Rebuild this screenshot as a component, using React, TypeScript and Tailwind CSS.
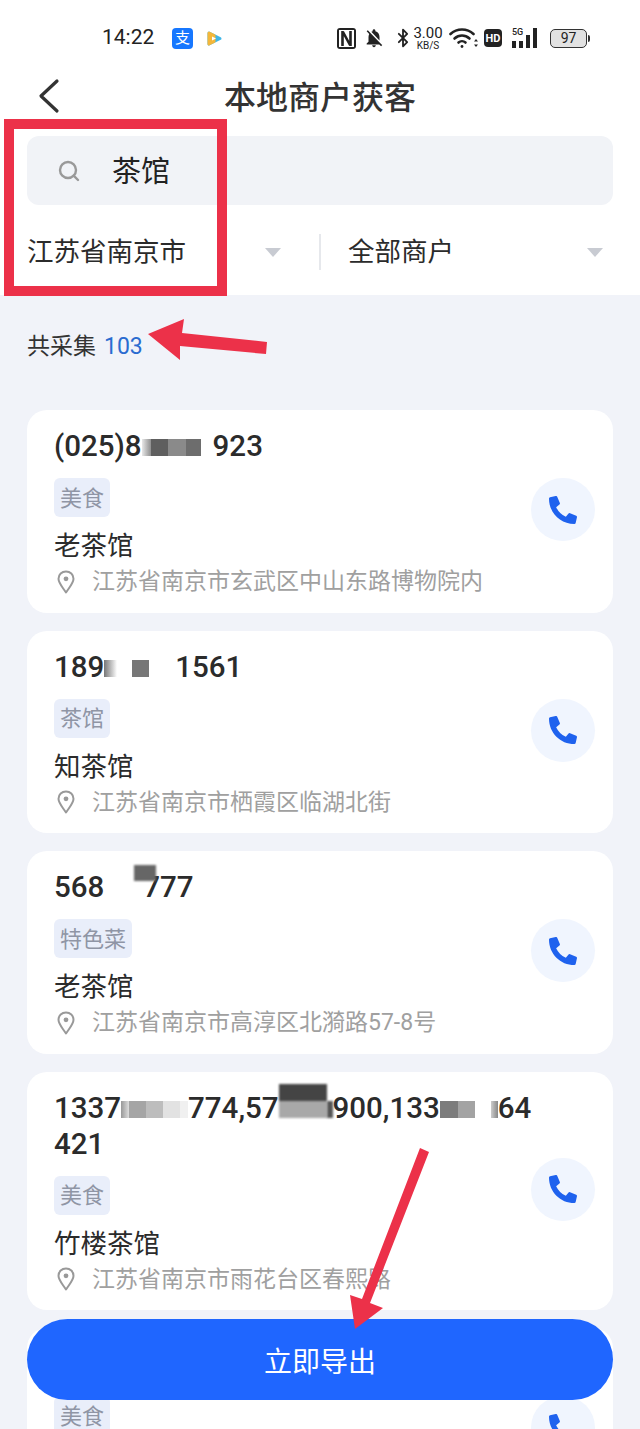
import type { ReactNode } from "react";
import { Bluetooth, Search } from "lucide-react";
import { FaPhoneAlt } from "react-icons/fa";
import { MdNotificationsOff } from "react-icons/md";

type Shop = {
  phone: ReactNode;
  tag: string;
  name?: string;
  address?: string;
};

const shops: Shop[] = [
  {
    phone: (
      <>
        (025)8
        <i className="inline-block w-[9px] h-[17px] bg-gradient-to-r from-[#e8e8e8] to-[#8f8f8f]" />
        <i className="inline-block w-[17px] h-[17px] bg-[#5f5f5f]" />
        <i className="inline-block w-[18px] h-[17px] bg-[#8a8a8a]" />
        <i className="inline-block w-[15px] h-[17px] bg-[#6d6d6d]" />
        <i className="inline-block w-[12px] h-[17px]" />
        923
      </>
    ),
    tag: "美食",
    name: "老茶馆",
    address: "江苏省南京市玄武区中山东路博物院内",
  },
  {
    phone: (
      <>
        189
        <i className="inline-block w-[13px] h-[17px] bg-gradient-to-r from-[#777777] to-white" />
        <i className="inline-block w-[15px] h-[17px]" />
        <i className="inline-block w-[17px] h-[17px] bg-[#777777]" />
        <i className="inline-block w-[26px] h-[17px]" />
        1561
      </>
    ),
    tag: "茶馆",
    name: "知茶馆",
    address: "江苏省南京市栖霞区临湖北街",
  },
  {
    phone: (
      <>
        568
        <i className="inline-block w-[30px] h-[17px]" />
        <i className="inline-block w-[22px] h-[32px] -mt-[15px] -mr-[13px] blur-[1px] bg-[linear-gradient(#666666_50%,transparent_50%)]" />
        777
      </>
    ),
    tag: "特色菜",
    name: "老茶馆",
    address: "江苏省南京市高淳区北漪路57-8号",
  },
  {
    phone: (
      <>
        1337
        <i className="inline-block w-[8px] h-[17px] bg-gradient-to-r from-[#999999] to-[#dddddd]" />
        <i className="inline-block w-[17px] h-[17px] bg-[#a5a5a5]" />
        <i className="inline-block w-[17px] h-[17px] bg-[#bdbdbd]" />
        <i className="inline-block w-[17px] h-[17px] bg-[#e2e2e2]" />
        <i className="inline-block w-[8px] h-[17px] bg-[#f0f0f0]" />
        774,57
        <i className="inline-block w-[48px] h-[34px] -mt-[17px] blur-[1px] bg-[linear-gradient(#444444_50%,#a8a8a8_50%)]" />
        <i className="inline-block w-[6px] h-[17px] bg-[#555555] blur-[1px]" />
        900,133
        <i className="inline-block w-[18px] h-[17px] bg-[#7c7c7c]" />
        <i className="inline-block w-[17px] h-[17px] bg-[#a3a3a3]" />
        <i className="inline-block w-[16px] h-[17px]" />
        <i className="inline-block w-[7px] h-[17px] bg-gradient-to-r from-[#cccccc] to-[#888888]" />
        64
        <br />
        421
      </>
    ),
    tag: "美食",
    name: "竹楼茶馆",
    address: "江苏省南京市雨花台区春熙路",
  },
  { phone: "\u00a0", tag: "美食" },
];

function StatusBar() {
  return (
    <div className="flex items-center h-[76px] pl-[102px] text-[#222]">
      <span className="text-[21px] w-[70px]">14:22</span>
      <span className="flex items-center justify-center w-[21px] h-[21px] rounded-[4px] bg-[#1677ff] text-white text-[15px] leading-none">
        支
      </span>
      <svg className="ml-[13px]" width="17" height="17" viewBox="0 0 17 17">
        <path d="M3 3 L14 8.5 L3 14 Z" fill="#3fb6e8" stroke="#3fb6e8" strokeWidth="3" strokeLinejoin="round" />
        <path d="M3 3 L8 5.5 L8 11.5 L3 14 Z" fill="#f4b73a" stroke="#f4b73a" strokeWidth="3" strokeLinejoin="round" />
        <path d="M6 6.5 L10 8.5 L6 10.5 Z" fill="#ffffff" />
      </svg>
      <svg className="ml-[114px]" width="19" height="21" viewBox="0 0 19 21">
        <rect x="0" y="0" width="19" height="21" rx="3" fill="#222222" />
        <rect x="2" y="2" width="15" height="17" fill="#ffffff" />
        <path d="M5.5 3 V18 M13.5 3 V18 M6 4 L13 17" stroke="#222222" strokeWidth="2.6" fill="none" />
      </svg>
      <MdNotificationsOff className="ml-[7px]" size={22} color="#222222" />
      <Bluetooth className="ml-[8px]" size={20} strokeWidth={2.2} />
      <span className="-ml-[1px] flex flex-col items-center w-[32px] leading-none">
        <span className="text-[15px] leading-[15px]">3.00</span>
        <span className="text-[10px] leading-[10px]">KB/S</span>
      </span>
      <svg className="ml-[5px]" width="30" height="22" viewBox="0 0 30 22" fill="none" stroke="#222222" strokeWidth="2.6" strokeLinecap="round">
        <path d="M1.5 7 C8 1 18 1 24.5 7" />
        <path d="M5.5 11.5 C10 7.5 16 7.5 20.5 11.5" />
        <path d="M9.5 15.5 C11.5 13.8 14.5 13.8 16.5 15.5" />
        <circle cx="13" cy="19.5" r="1.4" fill="#222222" stroke="none" />
        <path d="M27 12 L25 14.5 H29 Z M27 20 L25 17.5 H29 Z" fill="#222222" stroke="none" />
      </svg>
      <span className="ml-[5px] flex items-center justify-center w-[18px] h-[18px] rounded-[4px] bg-[#222] text-white text-[11px] font-bold leading-none">
        HD
      </span>
      <span className="ml-[10px] flex items-end h-[20px] relative w-[28px]">
        <span className="absolute left-0 -top-[1px] text-[9px] leading-[10px] font-medium">5G</span>
        <span className="flex items-end gap-[3px]">
          <i className="w-[4px] h-[7px] bg-[#222]" />
          <i className="w-[4px] h-[7px] bg-[#222]" />
          <i className="w-[4px] h-[13px] bg-[#222]" />
          <i className="w-[4px] h-[20px] bg-[#222]" />
        </span>
      </span>
      <span className="ml-[10px] flex items-center">
        <span className="flex items-center justify-center w-[37px] h-[19px] rounded-[5px] border-[1.5px] border-[#333] bg-[#e2e2e2] text-[14px] leading-none">
          97
        </span>
        <i className="w-[2px] h-[7px] ml-[1px] bg-[#333] rounded-r-sm" />
      </span>
    </div>
  );
}

function Caret() {
  return (
    <svg width="16" height="9" viewBox="0 0 16 9">
      <path d="M0 0 H16 L8 9 Z" fill="#c8cbd2" />
    </svg>
  );
}

function Pin() {
  return (
    <svg className="ml-[3px] mr-[17px] shrink-0" width="18" height="24" viewBox="0 0 18 24" fill="none" stroke="#999999" strokeWidth="2">
      <path d="M9 22.5 C5 16.5 1.5 13 1.5 8.8 C1.5 4.6 4.8 1.5 9 1.5 C13.2 1.5 16.5 4.6 16.5 8.8 C16.5 13 13 16.5 9 22.5 Z" strokeLinejoin="round" />
      <circle cx="9" cy="8.8" r="2.4" fill="#999999" stroke="none" />
    </svg>
  );
}

function ShopCard({ shop }: { shop: Shop }) {
  return (
    <div className="flex items-center justify-between rounded-[20px] bg-white pl-[27px] pr-[18px] pt-[18px] pb-[15px] min-h-[202.5px]">
      <div className="flex flex-col items-start flex-1 min-w-0 self-start">
        <div className="whitespace-nowrap text-[29.5px] leading-[36px] font-medium text-[#2b2b2b]">{shop.phone}</div>
        <span className="mt-[14px] h-[39px] px-[6px] pt-[2px] flex items-center rounded-[6px] bg-[#e9eefa] text-[22px] leading-none text-[#8f95a5]">
          {shop.tag}
        </span>
        {shop.name && <div className="mt-[11px] text-[26.5px] leading-[36px] text-[#2b2b2b]">{shop.name}</div>}
        {shop.address && (
          <div className="mt-[2px] flex items-center text-[23px] leading-[31.5px] text-[#a0a0a0]">
            <Pin />
            {shop.address}
          </div>
        )}
      </div>
      <span className="flex items-center justify-center w-[64px] h-[63px] mb-[6px] rounded-full bg-[#f0f5fe] shrink-0">
        <FaPhoneAlt size={28} color="#1f62ee" />
      </span>
    </div>
  );
}

export default function App() {
  return (
    <div className="relative h-[1429px] w-[640px] overflow-hidden bg-[#f1f3f9] font-[Roboto,'Noto_Sans_CJK_SC',sans-serif]">
      <div className="bg-white h-[295px]">
        <StatusBar />
        <div className="flex items-center h-[44px] relative justify-center">
          <svg className="absolute left-[38px] top-[2px]" width="22" height="36" viewBox="0 0 22 36" fill="none" stroke="#333333" strokeWidth="3.2" strokeLinecap="round" strokeLinejoin="round">
            <path d="M19 3 L3 18 L19 33" />
          </svg>
          <h1 className="text-[32px] leading-[44px] font-medium text-[#333]">本地商户获客</h1>
        </div>
        <div className="mt-[16px] mx-[27px] h-[69px] rounded-[12px] bg-[#f1f3f7] flex items-center pl-[30px]">
          <Search size={24} strokeWidth={2.4} color="#999999" />
          <span className="ml-[31px] pt-[4px] text-[29px] text-[#222]">茶馆</span>
        </div>
        <div className="flex items-center h-[90px] pt-[4px]">
          <div className="w-[319px] pl-[27px] pr-[38px] flex items-center justify-between">
            <span className="text-[26.5px] text-[#2b2b2b]">江苏省南京市</span>
            <Caret />
          </div>
          <i className="w-[2px] h-[36px] bg-[#e6e8ec]" />
          <div className="w-[292px] pl-[27px] pr-[10px] flex items-center justify-between">
            <span className="text-[26.5px] text-[#2b2b2b]">全部商户</span>
            <Caret />
          </div>
        </div>
      </div>

      <div className="px-[27px] pt-[36px] flex items-center h-[79px] pb-[10px] text-[23px] text-[#333]">
        共采集
        <span className="ml-[8px] text-[#2a6bd0]">103</span>
      </div>

      <div className="mt-[36px] mx-[27px] flex flex-col gap-[18px]">
        {shops.map((shop, i) => (
          <ShopCard key={i} shop={shop} />
        ))}
      </div>

      <button className="absolute left-[27px] top-[1319px] w-[586px] h-[81px] pt-[6px] rounded-full bg-[#1f66ff] text-white text-[28px]">
        立即导出
      </button>

      {/* red markup drawn over the screenshot */}
      <div className="absolute left-[4px] top-[119px] w-[223px] h-[177px] border-[10px] border-[#ec3149]" />
      <svg className="absolute inset-0 pointer-events-none" width="640" height="1429" viewBox="0 0 640 1429">
        <polygon points="148,334 184,319 182,333 267,342 266,354 180,346 180,360" fill="#ec3149" />
        <polygon points="420,1148 429,1152 370,1303 383,1308 355,1329 350,1295 362,1299" fill="#ec3149" />
      </svg>
    </div>
  );
}
